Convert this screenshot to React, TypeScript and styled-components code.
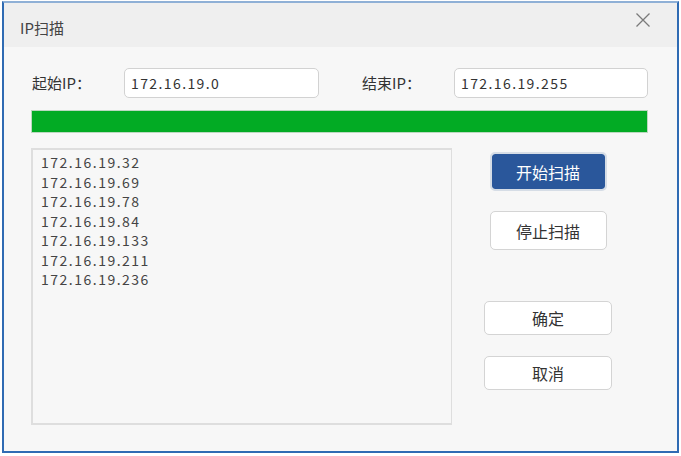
import styled, { createGlobalStyle } from "styled-components";

const GlobalStyle = createGlobalStyle`
    html, body {
        margin: 0;
        padding: 0;
        background: #ffffff;
    }
    body {
        font-family: "Noto Sans CJK SC", "Noto Sans", sans-serif;
        color: #333;
    }
`;

const foundIps = [
    "172.16.19.32",
    "172.16.19.69",
    "172.16.19.78",
    "172.16.19.84",
    "172.16.19.133",
    "172.16.19.211",
    "172.16.19.236",
];

const CloseIcon = () => (
    <svg width="16" height="16" viewBox="0 0 16 16">
        <path d="M1.5 1.5 L14.5 14.5 M14.5 1.5 L1.5 14.5" stroke="#7a7a7a" strokeWidth="1.3" fill="none" />
    </svg>
);

export default function App() {
    return (
        <>
            <GlobalStyle />
            <Window>
                <TitleBar>
                    <Title>IP扫描</Title>
                    <CloseButton aria-label="关闭">
                        <CloseIcon />
                    </CloseButton>
                </TitleBar>

                <Body>
                    <RangeRow>
                        <Label>起始IP：</Label>
                        <Field $width={195} defaultValue="172.16.19.0" />
                        <Label $gap={43}>结束IP：</Label>
                        <Field $width={194} defaultValue="172.16.19.255" />
                    </RangeRow>

                    <Progress>
                        <ProgressFill style={{ width: "100%" }} />
                    </Progress>

                    <MainArea>
                        <ResultList>
                            {foundIps.map((ip) => (
                                <ResultItem key={ip}>{ip}</ResultItem>
                            ))}
                        </ResultList>

                        <ActionColumn>
                            <ActionButton $primary $wide={false}>开始扫描</ActionButton>
                            <ActionButton $wide={false} $top={20}>停止扫描</ActionButton>
                            <ActionButton $wide $top={51}>确定</ActionButton>
                            <ActionButton $wide $top={21}>取消</ActionButton>
                        </ActionColumn>
                    </MainArea>
                </Body>
            </Window>
        </>
    );
}

/* -------------------- Styled Components -------------------- */

const Window = styled.div`
    box-sizing: border-box;
    margin: 1px 0 0 2px;
    width: 677px;
    height: 452px;
    border: 2px solid #2f6bb3;
    border-top: 2px solid #8fb0d6;
    background: #f7f7f7;
    display: flex;
    flex-direction: column;
`;

const TitleBar = styled.div`
    height: 44px;
    flex-shrink: 0;
    background: #efefef;
    display: flex;
    align-items: center;
    justify-content: space-between;
    padding: 0 26px 0 16px;
`;

const Title = styled.span`
    font-size: 15px;
    color: #444;
    margin-top: 5px;
`;

const CloseButton = styled.button`
    border: none;
    background: transparent;
    padding: 0;
    display: flex;
    margin-top: -10px;
`;

const Body = styled.div`
    flex: 1;
    display: flex;
    flex-direction: column;
    padding: 21px 29px 26px 27px;
`;

const RangeRow = styled.div`
    display: flex;
    align-items: center;
    height: 30px;
`;

const Label = styled.span<{ $gap?: number }>`
    width: 92px;
    margin-left: ${({ $gap }) => $gap ?? 1}px;
    font-size: 15px;
    color: #333;
    margin-top: -2px;
    white-space: nowrap;
`;

const Field = styled.input<{ $width: number }>`
    box-sizing: border-box;
    width: ${({ $width }) => $width}px;
    height: 30px;
    border: 1px solid #d2d2d2;
    border-radius: 5px;
    background: #fff;
    padding: 0 6px;
    font-family: "Noto Sans CJK SC", "Noto Sans", sans-serif;
    font-size: 14px;
    letter-spacing: 1.4px;
    color: #333;
    outline: none;
`;

const Progress = styled.div`
    box-sizing: border-box;
    margin-top: 12px;
    height: 23px;
    border: 1px solid #bcd8c0;
    background: #f7f7f7;
`;

const ProgressFill = styled.div`
    height: 100%;
    background: #02ab24;
`;

const MainArea = styled.div`
    flex: 1;
    display: flex;
    margin-top: 15px;
`;

const ResultList = styled.div`
    box-sizing: border-box;
    width: 421px;
    height: 277px;
    border: 2px solid #dedede;
    border-right-width: 1px;
    padding: 3px 0 0 8px;
    display: flex;
    flex-direction: column;
`;

const ResultItem = styled.div`
    font-size: 14px;
    line-height: 19.5px;
    letter-spacing: 1.5px;
    color: #444;
`;

const ActionColumn = styled.div`
    flex: 1;
    display: flex;
    flex-direction: column;
    align-items: center;
    padding: 4px 4px 0 0;
`;

const ActionButton = styled.button<{ $primary?: boolean; $wide: boolean; $top?: number }>`
    box-sizing: border-box;
    width: ${({ $wide }) => ($wide ? 128 : 117)}px;
    height: ${({ $wide }) => ($wide ? 34 : 39)}px;
    margin-top: ${({ $top }) => $top ?? 0}px;
    border-radius: 5px;
    border: ${({ $primary }) => ($primary ? "2px solid #d6dde6" : "1px solid #d4d4d4")};
    background: ${({ $primary }) => ($primary ? "#2a579b" : "#ffffff")};
    background-clip: padding-box;
    color: ${({ $primary }) => ($primary ? "#ffffff" : "#333333")};
    font-family: "Noto Sans CJK SC", "Noto Sans", sans-serif;
    font-size: 16px;
    padding: 0;
    cursor: pointer;
`;
